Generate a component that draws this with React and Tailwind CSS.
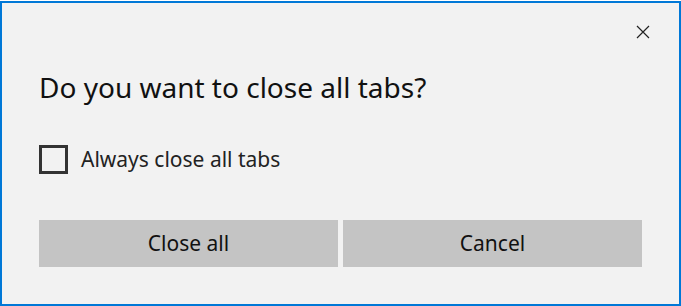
import React, { useState } from "react";

const CloseAllDialog = () => {
    const [always, setAlways] = useState(false);

    return (
        <div className="w-[681px] h-[306px] bg-white pt-px">
            <div
                className="relative flex flex-col h-[305px] border-2 border-[#0078d7] bg-[#f2f2f2] pl-[37px] pr-[37px] text-[#000]"
                style={{ fontFamily: '"Noto Sans", "Open Sans", sans-serif' }}
            >
                <button className="absolute right-[29px] top-[22px] w-[14px] h-[14px] flex items-center justify-center">
                    <svg width="14" height="14" viewBox="0 0 14 14" fill="none" stroke="#222" strokeWidth="1.2">
                        <path d="M1 1 L13 13 M13 1 L1 13" />
                    </svg>
                </button>

                <h2 className="mt-[66px] text-[28px] leading-[36px] font-normal text-[#111]">
                    Do you want to close all tabs?
                </h2>

                <label className="mt-[40px] flex items-center gap-[13px] cursor-pointer">
                    <span
                        onClick={() => setAlways(!always)}
                        className="w-[29px] h-[29px] border-[3px] border-[#333] bg-transparent"
                    />
                    <span className="text-[21px] leading-[29px] text-[#222]">Always close all tabs</span>
                </label>

                <div className="mt-[46px] flex gap-[5px]">
                    <button className="flex-1 h-[47px] bg-[#c4c4c4] text-[21px] text-[#111]">Close all</button>
                    <button className="flex-1 h-[47px] bg-[#c4c4c4] text-[21px] text-[#111]">Cancel</button>
                </div>
            </div>
        </div>
    );
};

export default function App() {
    return <CloseAllDialog />;
}
